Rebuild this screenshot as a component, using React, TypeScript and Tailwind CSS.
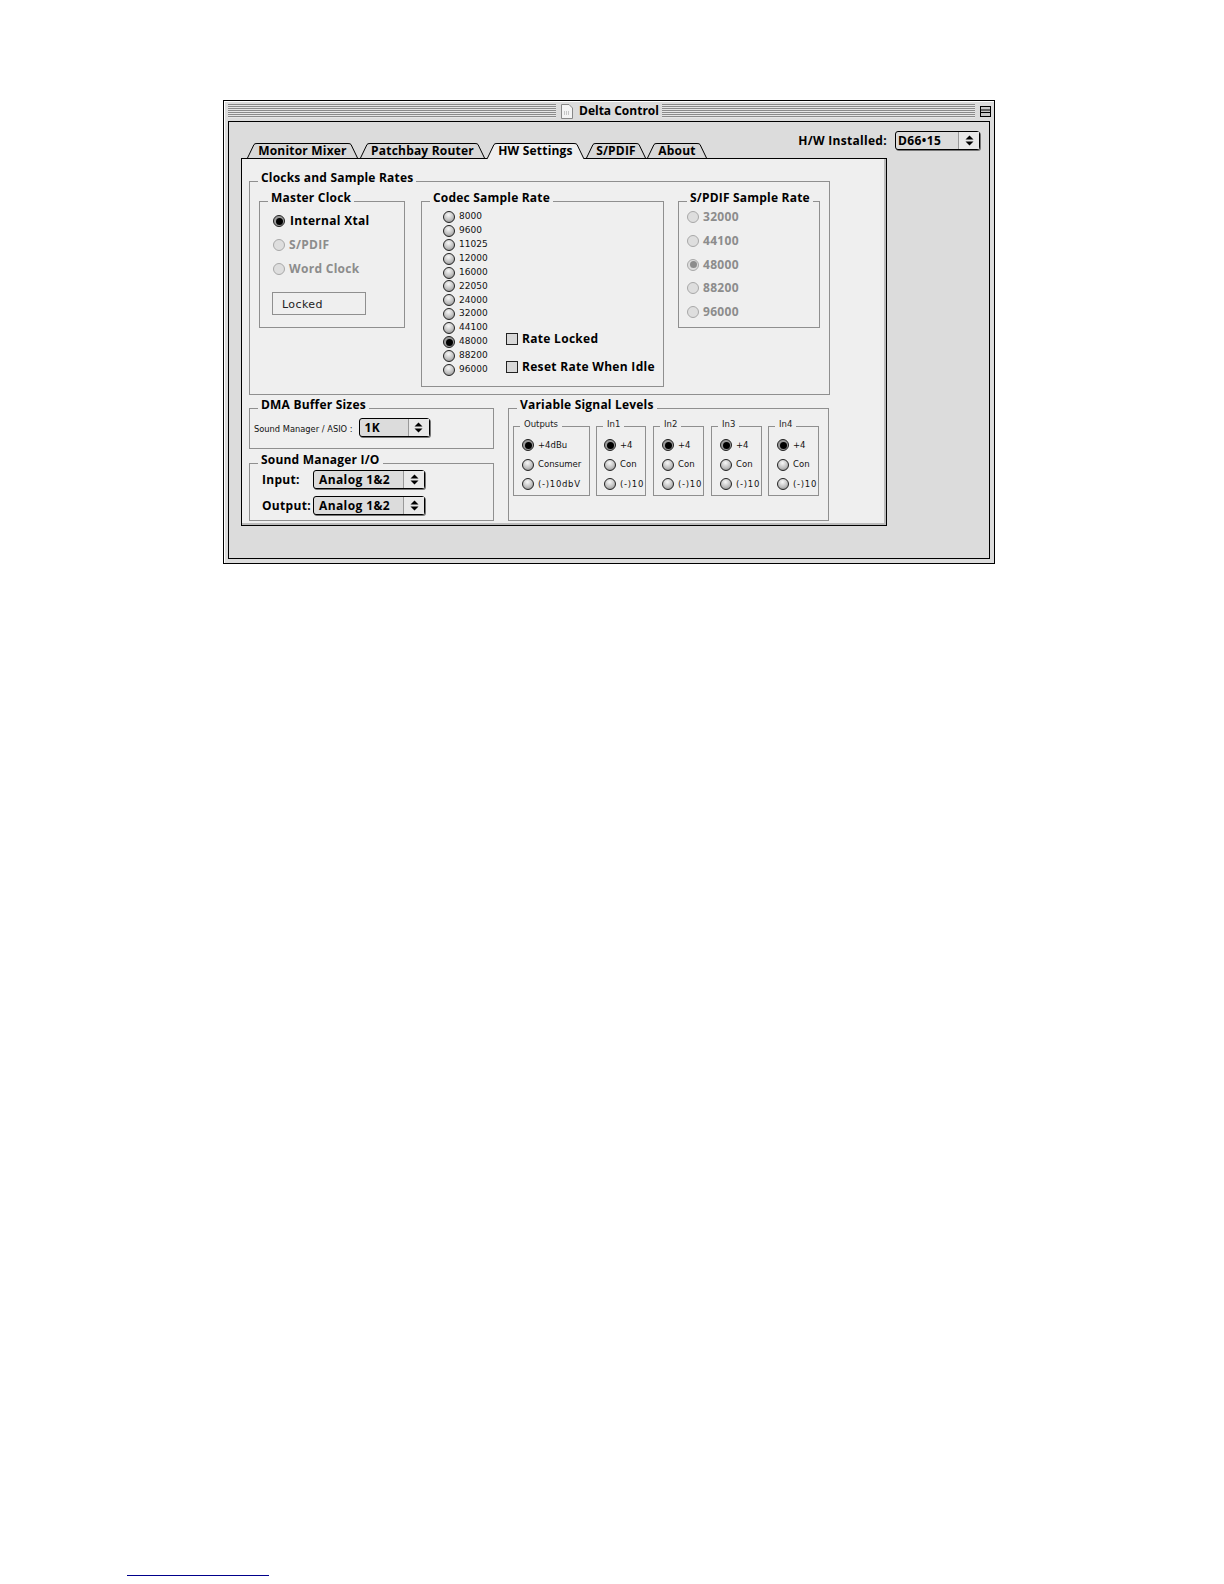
import type { ReactNode } from "react";

function Radio({ on, off }: { on?: boolean; off?: boolean }) {
  if (off) {
    return (
      <span className="flex h-[12px] w-[12px] shrink-0 items-center justify-center rounded-full border border-[#a8a8a8] bg-[#dedede]">
        {on && <span className="h-[7px] w-[7px] rounded-full bg-[#8c8c8c]" />}
      </span>
    );
  }
  if (on) {
    return (
      <span className="flex h-[12px] w-[12px] shrink-0 items-center justify-center rounded-full border border-[#222] bg-[#9a9a9a]">
        <span className="h-[7px] w-[7px] rounded-full bg-black" />
      </span>
    );
  }
  return (
    <span className="h-[12px] w-[12px] shrink-0 rounded-full border border-[#222] bg-[radial-gradient(circle_at_45%_30%,#f8f8f8,#c0c0c0_55%,#808080)]" />
  );
}

function Group({
  title,
  small,
  className,
  children,
}: {
  title: string;
  small?: boolean;
  className: string;
  children?: ReactNode;
}) {
  return (
    <div className={`relative shrink-0 border border-[#8f8f8f] ${className}`}>
      <span
        className={
          small
            ? "absolute -top-[9px] left-[6px] bg-[#efefef] px-[4px] font-['DejaVu_Sans',sans-serif] text-[8.5px] leading-[12px] text-[#222]"
            : "absolute -top-[13px] left-[8px] whitespace-nowrap bg-[#efefef] px-[3px] text-[12px] leading-[17px] font-bold tracking-[0.2px] text-black"
        }
      >
        {title}
      </span>
      {children}
    </div>
  );
}

function Popup({ label, className, pad = "pl-[5px]" }: { label: string; className: string; pad?: string }) {
  return (
    <div
      className={`flex h-[19px] items-stretch rounded-[3px] border border-black bg-[#dcdcdc] shadow-[1px_1px_0_#777] ${className}`}
    >
      <span className={`flex-1 text-[12px] leading-[17px] font-bold tracking-[0.4px] whitespace-nowrap text-black ${pad}`}>
        {label}
      </span>
      <span className="flex w-[21px] items-center justify-center border-l border-[#999] bg-[#e8e8e8]">
        <svg width="9" height="11" viewBox="0 0 9 11">
          <path d="M4.5 0.5 L8.5 4.5 H0.5 Z M4.5 10.5 L8.5 6.5 H0.5 Z" fill="#000" />
        </svg>
      </span>
    </div>
  );
}

function Tab({ label, active, className }: { label: string; active?: boolean; className: string }) {
  const h = active ? 16 : 15;
  const fill = active ? "#efefef" : "#d8d8d8";
  return (
    <div className={`flex items-stretch ${active ? "relative z-10 -mb-px h-[16px]" : "h-[15px]"} ${className}`}>
      <svg width="10" height={h} viewBox={`0 0 10 ${h}`} className="shrink-0">
        <path d={`M0.5 ${h} L7 1.5 Q7.5 0.5 10 0.5 V${h} Z`} fill={fill} />
        <path d={`M0.5 15 L7 1.5 Q7.5 0.5 10 0.5`} fill="none" stroke="#000" />
      </svg>
      <div
        className={`flex-1 border-t border-black text-center text-[12px] leading-[14px] font-bold tracking-[0.2px] whitespace-nowrap text-black ${active ? "bg-[#efefef]" : "bg-[#d8d8d8]"}`}
      >
        {label}
      </div>
      <svg width="10" height={h} viewBox={`0 0 10 ${h}`} className="shrink-0">
        <path d={`M9.5 ${h} L3 1.5 Q2.5 0.5 0 0.5 V${h} Z`} fill={fill} />
        <path d={`M9.5 15 L3 1.5 Q2.5 0.5 0 0.5`} fill="none" stroke="#000" />
      </svg>
    </div>
  );
}

function Stripes({ className }: { className: string }) {
  return (
    <div
      className={`h-[14px] bg-[repeating-linear-gradient(to_bottom,#8a8a8a_0px,#8a8a8a_1px,#e6e6e6_1px,#e6e6e6_2px)] ${className}`}
    />
  );
}

function LevelGroup({
  title,
  className,
  labels,
  pad = "pl-[8px]",
}: {
  title: string;
  className: string;
  labels: string[];
  pad?: string;
}) {
  return (
    <Group title={title} small className={className}>
      <div className={`flex flex-col gap-[7.5px] pt-[12px] ${pad}`}>
        {labels.map((l, i) => (
          <div key={l} className="flex h-[12px] items-center gap-[4px]">
            <Radio on={i === 0} />
            <span
              className={`font-['DejaVu_Sans',sans-serif] text-[8.5px] whitespace-nowrap text-[#111] ${l.startsWith("(") ? "tracking-[0.7px]" : ""}`}
            >
              {l}
            </span>
          </div>
        ))}
      </div>
    </Group>
  );
}

const CODEC = ["8000", "9600", "11025", "12000", "16000", "22050", "24000", "32000", "44100", "48000", "88200", "96000"];
const SPDIF = ["32000", "44100", "48000", "88200", "96000"];
const SHORT = ["+4", "Con", "(-)10"];

export default function App() {
  return (
    <div className="flex h-[1584px] flex-col overflow-hidden bg-white font-['Open_Sans',sans-serif]">
      <div className="mt-[100px] ml-[223px] h-[464px] w-[772px] border border-black bg-[#dcdcdc] shadow-[inset_1px_1px_0_#fff]">
        <div className="flex h-[20px] items-center pr-[3px] pl-[4px]">
          <Stripes className="w-[328px] shrink-0" />
          <svg width="12" height="15" viewBox="0 0 12 15" className="ml-[5px] shrink-0">
            <path d="M0.5 0.5 H8 L11.5 4 V14.5 H0.5 Z" fill="#f4f4f4" stroke="#888" />
            <path d="M3 8 H9 M3 10 H9" stroke="#999" strokeDasharray="1 1" />
          </svg>
          <span className="mr-[3px] ml-[6px] text-[12px] leading-[16px] font-bold text-black">Delta Control</span>
          <Stripes className="flex-1" />
          <svg width="11" height="11" viewBox="0 0 11 11" className="ml-[5px] shrink-0">
            <rect x="0.5" y="0.5" width="10" height="10" fill="#c8c8c8" stroke="#000" />
            <path d="M0.5 4 H10.5 M0.5 6.5 H10.5" stroke="#000" />
          </svg>
        </div>
        <div className="mx-[4px] h-[438px] border border-black bg-[#dcdcdc]">
          <div className="flex h-[36px] items-end justify-between pr-[9px] pl-[18px]">
            <div className="flex items-end">
              <Tab label="Monitor Mixer" className="w-[111px]" />
              <Tab label="Patchbay Router" className="ml-[2px] w-[125px]" />
              <Tab label="HW Settings" active className="ml-[2px] w-[97px]" />
              <Tab label="S/PDIF" className="ml-[2px] w-[60px]" />
              <Tab label="About" className="ml-[1px] w-[60px]" />
            </div>
            <div className="flex items-center gap-[8px] self-start pt-[9px]">
              <span className="text-[12px] leading-[17px] font-bold tracking-[0.3px] text-black">H/W Installed:</span>
              <Popup label="D66•15" className="w-[85px]" pad="pl-[2px]" />
            </div>
          </div>
          <div className="ml-[12px] h-[368px] w-[646px] border border-black bg-[#efefef] pt-[22px] pl-[7px] shadow-[inset_-2px_-2px_0_#bbb]">
            <Group title="Clocks and Sample Rates" className="flex h-[214px] w-[581px] pt-[19px] pl-[9px]">
              <Group title="Master Clock" className="h-[127px] w-[146px]">
                <div className="flex flex-col gap-[12px] pt-[13px] pl-[13px]">
                  <div className="flex h-[12px] items-center gap-[5px] text-[12px] font-bold tracking-[0.3px] text-black">
                    <Radio on />
                    Internal Xtal
                  </div>
                  <div className="flex h-[12px] items-center gap-[4px] text-[12px] font-bold tracking-[0.3px] text-[#8c8c8c]">
                    <Radio off />
                    S/PDIF
                  </div>
                  <div className="flex h-[12px] items-center gap-[4px] text-[12px] font-bold tracking-[0.3px] text-[#8c8c8c]">
                    <Radio off />
                    Word Clock
                  </div>
                </div>
                <div className="mt-[17px] ml-[12px] h-[23px] w-[94px] border border-[#8f8f8f] pl-[9px] font-['DejaVu_Sans',sans-serif] text-[11px] leading-[23px] tracking-[0.4px] text-[#222]">
                  Locked
                </div>
              </Group>
              <Group title="Codec Sample Rate" className="ml-[16px] flex h-[186px] w-[243px]">
                <div className="flex w-[84px] flex-col gap-[1.9px] pt-[9px] pl-[21px]">
                  {CODEC.map((r) => (
                    <div key={r} className="flex h-[12px] items-center gap-[4px]">
                      <Radio on={r === "48000"} />
                      <span className="font-['DejaVu_Sans',sans-serif] text-[9px] text-[#111]">{r}</span>
                    </div>
                  ))}
                </div>
                <div className="flex flex-col gap-[16px] pt-[131px]">
                  {["Rate Locked", "Reset Rate When Idle"].map((c) => (
                    <div
                      key={c}
                      className="flex h-[12px] items-center gap-[4px] text-[12px] font-bold tracking-[0.3px] whitespace-nowrap text-black"
                    >
                      <span className="h-[12px] w-[12px] shrink-0 border border-[#222] bg-[#d8d8d8]" />
                      {c}
                    </div>
                  ))}
                </div>
              </Group>
              <Group title="S/PDIF Sample Rate" className="ml-[14px] h-[127px] w-[142px]">
                <div className="flex flex-col gap-[11.75px] pt-[9px] pl-[8px]">
                  {SPDIF.map((r) => (
                    <div
                      key={r}
                      className="flex h-[12px] items-center gap-[4px] text-[12px] font-bold tracking-[0.3px] text-[#8c8c8c]"
                    >
                      <Radio off on={r === "48000"} />
                      {r}
                    </div>
                  ))}
                </div>
              </Group>
            </Group>
            <div className="mt-[13px] flex">
              <div className="flex w-[245px] shrink-0 flex-col gap-[14px]">
                <Group title="DMA Buffer Sizes" className="flex h-[41px] items-center gap-[6px] pl-[4px]">
                  <span className="mt-[2px] font-['DejaVu_Sans',sans-serif] text-[8.3px] whitespace-nowrap text-[#111]">
                    Sound Manager / ASIO :
                  </span>
                  <Popup label="1K" className="-mt-[2px] w-[71px]" pad="pl-[5px]" />
                </Group>
                <Group title="Sound Manager I/O" className="h-[58px] pt-[6px]">
                  <div className="flex h-[19px] items-center pl-[12px]">
                    <span className="w-[51px] text-[12px] font-bold tracking-[0.3px] text-black">Input:</span>
                    <Popup label="Analog 1&2" className="w-[112px]" />
                  </div>
                  <div className="mt-[7px] flex h-[19px] items-center pl-[12px]">
                    <span className="w-[51px] text-[12px] font-bold tracking-[0.3px] whitespace-nowrap text-black">Output:</span>
                    <Popup label="Analog 1&2" className="w-[112px]" />
                  </div>
                </Group>
              </div>
              <Group title="Variable Signal Levels" className="ml-[14px] flex h-[113px] w-[321px] pt-[17px] pl-[4px]">
                <LevelGroup title="Outputs" className="h-[70px] w-[77px]" labels={["+4dBu", "Consumer", "(-)10dbV"]} />
                <LevelGroup title="In1" className="ml-[6px] h-[70px] w-[50px]" labels={SHORT} pad="pl-[7px]" />
                <LevelGroup title="In2" className="ml-[7px] h-[70px] w-[51px]" labels={SHORT} />
                <LevelGroup title="In3" className="ml-[7px] h-[70px] w-[51px]" labels={SHORT} />
                <LevelGroup title="In4" className="ml-[6px] h-[70px] w-[51px]" labels={SHORT} />
              </Group>
            </div>
          </div>
        </div>
      </div>
      <div className="mt-[1011px] ml-[127px] h-[1px] w-[142px] shrink-0 bg-[#00008b]" />
    </div>
  );
}
